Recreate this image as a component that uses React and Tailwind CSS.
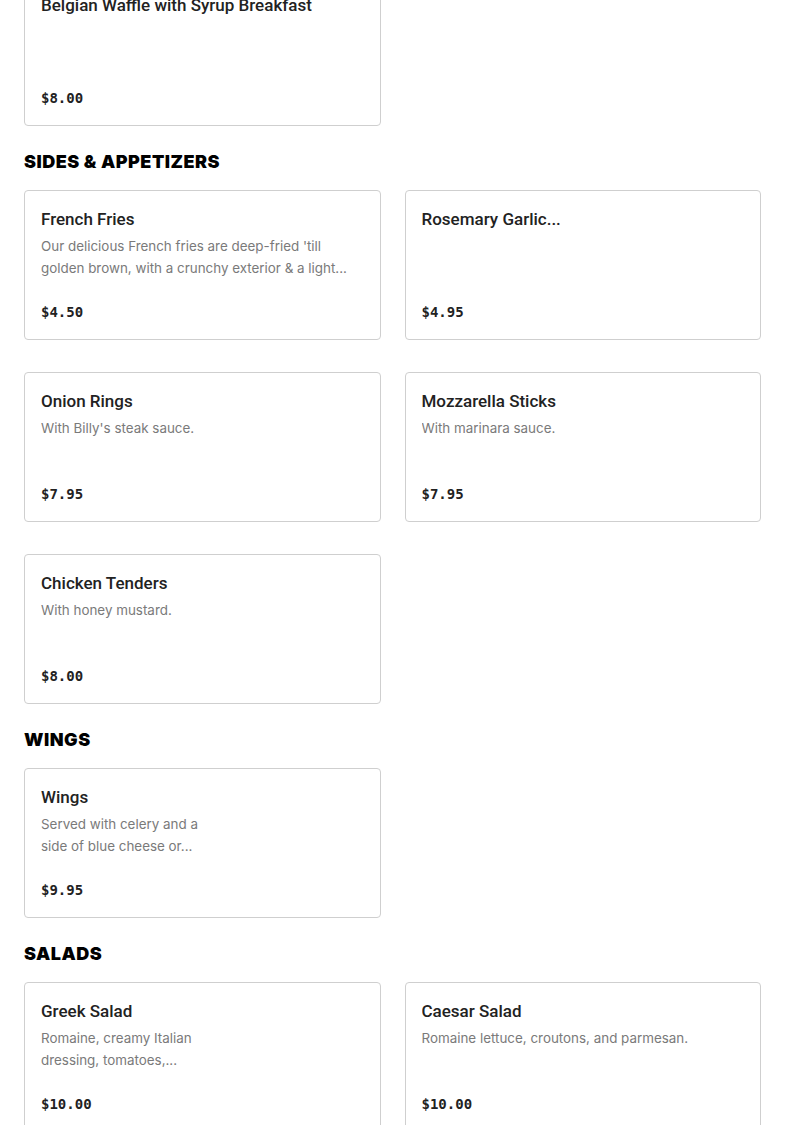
import React from 'react';

const sections = [
  {
    title: null,
    items: [{ name: 'Belgian Waffle with Syrup Breakfast', desc: null, price: '$8.00' }],
  },
  {
    title: 'SIDES & APPETIZERS',
    items: [
      {
        name: 'French Fries',
        desc: "Our delicious French fries are deep-fried 'till golden brown, with a crunchy exterior & a light...",
        price: '$4.50',
      },
      { name: 'Rosemary Garlic...', desc: null, price: '$4.95' },
      { name: 'Onion Rings', desc: "With Billy's steak sauce.", price: '$7.95' },
      { name: 'Mozzarella Sticks', desc: 'With marinara sauce.', price: '$7.95' },
      { name: 'Chicken Tenders', desc: 'With honey mustard.', price: '$8.00' },
    ],
  },
  {
    title: 'WINGS',
    items: [
      { name: 'Wings', desc: 'Served with celery and a side of blue cheese or...', price: '$9.95', narrow: true },
    ],
  },
  {
    title: 'SALADS',
    items: [
      { name: 'Greek Salad', desc: 'Romaine, creamy Italian dressing, tomatoes,...', price: '$10.00', narrow: true },
      { name: 'Caesar Salad', desc: 'Romaine lettuce, croutons, and parmesan.', price: '$10.00' },
    ],
  },
];

const MenuCard = ({ item }) => (
  <div className="h-[150px] flex flex-col border border-[#cfcfcf] rounded-[4px] bg-white px-4 pt-[17px] pb-[17px]">
    <h3 className="text-[17px] leading-[22px] font-medium text-[#222] truncate font-['Roboto',sans-serif]">
      {item.name}
    </h3>
    {item.desc && (
      <p
        className={`mt-[5px] text-[13.4px] leading-[22px] text-[#7a7a7a] line-clamp-2 ${
          item.narrow ? 'max-w-[170px]' : ''
        }`}
      >
        {item.desc}
      </p>
    )}
    <div className="mt-auto text-[14px] leading-5 font-semibold text-[#222] font-['DejaVu_Sans_Mono',monospace]">
      {item.price}
    </div>
  </div>
);

export default function App() {
  return (
    <div className="bg-white min-h-screen font-['Inter',sans-serif] overflow-hidden">
      <div className="px-6 mt-[-24px] pb-10">
        {sections.map((section, i) => (
          <section key={i}>
            {section.title && (
              <h2 className="mt-[22px] mb-[14px] text-[18px] leading-7 font-black text-black tracking-[0.5px]">
                {section.title}
              </h2>
            )}
            <div className="grid grid-cols-2 gap-x-6 gap-y-8">
              {section.items.map((item) => (
                <MenuCard key={item.name} item={item} />
              ))}
            </div>
          </section>
        ))}
      </div>
    </div>
  );
}
